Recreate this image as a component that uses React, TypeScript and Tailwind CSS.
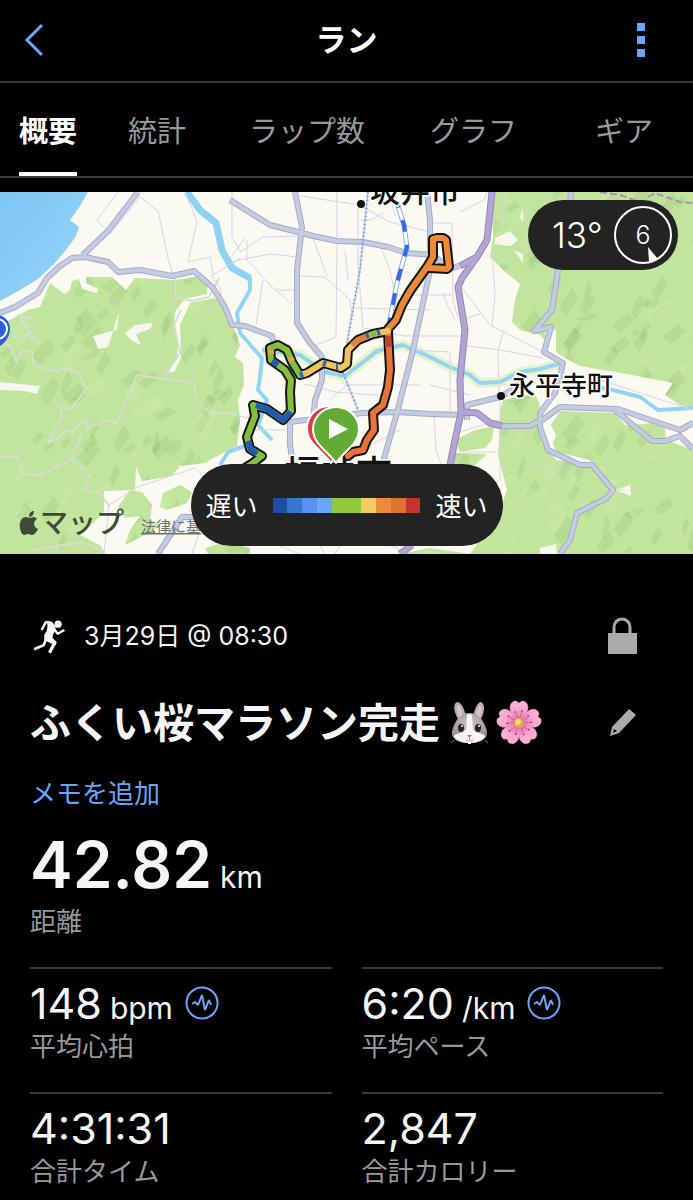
import React from 'react';

const WOODS = [
  'M50 283L64 294L70 290L72 281L79 279L82 289L97 293L98 289L86 283V277H112L126 290L135 278L175 280L195 277L207 284V294L185 299L176 310L174 320L178 340L177 358L168 372L140 376L137 392L128 430L123 429L124 410L137 375L174 372L181 358L180 325L190 303L215 298L222 303L228 317L237 335L240 345L235 357L243 363L244 385L238 400L240 420L237 446L223 453L205 463L180 466L172 476L142 481L136 467L135 490L104 491V512L92 524L80 535L100 545L105 554H0V325L14 318L28 310L40 307Z',
  'M118 507L130 490L142 492L152 505L150 520L160 525L145 535L125 545L130 530L140 516L125 518Z',
  'M160 507L163 493L180 485L192 492L187 503L167 510Z',
  'M205 548L225 542L250 548V554H208Z',
  'M492 192L493 237L490 257L503 270L520 284L515 300L512 322L520 330L540 335L545 340V330H556V352L565 358L580 366L603 370L627 374L673 383L665 395L680 405L693 408V192Z',
  'M500 412L503 400L535 394L540 406L538 420L550 448L556 460L592 465L590 460L556 452L553 443L556 435L551 425L560 411L615 413L625 425L643 424L664 422L666 440L693 450V554H400L430 548L470 554L500 510L507 490L498 455L500 428Z',
  'M455 440L475 430L494 426L492 440L485 448L460 452Z',
  'M455 453L487 454L475 465H452Z',
];

const CLEARINGS = [
  'M93 336L117 330L119 312L115 324L112 335L108 347L98 349Z',
  'M125 333L135 325L153 323L150 329L136 334L141 345L132 341Z',
  'M0 382L40 386L37 394L24 391L0 390Z',
  'M495 238L510 231L518 240L511 246L494 244Z',
  'M514 250L523 254V263Z',
  'M520 217L523 208V222Z',
  'M615 490L630 485L631 496Z',
  'M540 548L556 544L557 554H540Z',
];

const MAIN_ROADS = [
  'M138 192L108 231L83 255',
  'M0 313L15 307L38 293L47 278L60 266L72 258L85 257L108 262L118 272L140 270L172 276L194 271L213 288L225 307L232 325L245 326L272 336L275 350',
  'M230 200L270 225L302 233L313 236L337 241L363 242L388 247L407 253L433 255L450 269L470 262',
  'M295 192L302 227L297 270V323L310 343L322 357V380L315 400L313 420',
  'M427 192L430 220V270L423 303L413 350L397 413L385 455L380 475',
  'M294 470L290 445V422L330 417L363 413L397 412L430 414L463 415',
  'M571 192L568 230L558 270L552 310L534 331L551 327L544 352L563 363L560 377L555 393L540 413V427L548 450L580 465L592 465L613 490L607 498L577 513L570 540L560 554',
  'M502 426H530L545 418L560 407L618 409L680 430L693 423',
  'M615 410L652 441H665L680 436L693 449',
  'M467 420V405L500 397L515 388',
  'M158 554L182 517H200',
];

const HIGHWAYS = [
  'M492 192L487 240L477 257L462 278L458 287L465 330L463 350L460 380L461 413L455 440L449 470',
  'M460 266L477 257',
  'M462 412L477 413L490 423L502 426',
  'M400 554L412 545',
];

const LANES = [
  'M118 192L97 220L110 234L140 197L158 211L168 258L173 275',
  'M185 192L197 221L188 262L210 257L213 275L240 258',
  'M232 192V237L241 252L262 237L302 236',
  'M211 275L220 288L222 302',
  'M337 192V243L336 337L316 345L327 365',
  'M230 258L245 238M247 240V260L270 285L292 304M230 262L270 254L297 257M263 280L256 325M297 276L325 277L350 300L352 320M313 238L327 276M276 290H297',
  'M345 250L348 280M358 208V265L363 328L405 336H468',
  'M300 196L360 205L390 222L430 232M361 220H371L383 213M390 192L395 216M378 240L390 270L395 295H452M432 223H452L453 300L458 318',
  'M355 308L430 310M443 292L447 304L455 320M462 288L490 325L543 352M460 345L500 350L543 358M492 250L495 295L492 325M504 330L498 350L499 395',
  'M487 192L484 200L460 212M505 192L500 225M460 320L480 314',
  'M305 384L335 392L388 396M330 400L350 382M322 357L345 385H420M430 385L470 395M434 414L436 450L445 475M400 430L370 445L300 460',
  'M230 415L250 418M255 430L290 430M413 350L450 352V412M500 400V480M460 452H496M460 432L499 420M600 380L693 410',
  'M104 554L109 505L137 487L195 468L203 476M185 520L205 530M192 554L200 530M320 545L325 554M340 545L335 554M280 546L300 554M390 545L410 554',
  'M530 465L562 466M612 490H625',
];

const TRAILS = [
  'M12 335L20 340L27 334L34 339L28 330L38 343L20 318H31L17 315',
  'M0 333L12 350L16 362L22 351L32 352L34 365L55 371L66 368L80 374L86 388L71 410L60 406L62 415L48 443L58 438L67 430L73 432L86 418L87 430L105 420L117 423L137 375L194 383L196 402L210 412L240 414',
  'M0 457L18 457L22 474L40 475L72 459L82 432M72 459L91 478L84 490L100 493L109 506M30 551L80 542L104 551',
  'M175 276V297L192 301L209 297L219 278M181 310L174 325L180 353L165 376',
];

const RIVERS = [
  'M187 192L200 210L216 223L222 250L232 268L250 278L250 290L237 313L240 333L253 348L262 358L260 377L258 390L267 400L258 425L272 440',
  'M220 465L228 452L245 446L258 449',
  'M262 350L300 355L325 372L345 376L363 362L377 351L403 345L430 357L450 367L470 375L480 383L500 382L520 372L540 369L562 363',
  'M585 385L613 390L640 397L658 410L693 408',
];

const BORDERS = 'M600 192L620 195L645 204M648 197L655 193L680 202L693 203';

const ROUTE = [
  { color: '#ea8a38', d: 'M388 329L396 320L402 305L410 291L427 267L433 257L433 239L437 238H443L446 240L449 267L447 269L430 268' },
  { color: '#e9713a', d: 'M388 332L390 370L388 387L383 405L373 413L374 430L367 440L363 450L353 452L348 456' },
  { color: '#f0c45c', d: 'M388 331L373 334L358 340L348 350L347 364L341 368L323 363L307 373L300 375' },
  { color: '#83bf3b', d: 'M300 375L292 362L287 350L278 345L270 348L271 360L285 370L291 380L290 392L291 411L283 420L267 409L253 405L255 416L247 437L250 449L262 456L253 463L245 468' },
];

const ROUTE_MARKS = [
  { color: '#c6402e', d: 'M388 336V347' },
  { color: '#dd8138', d: 'M368 336L358 340L352 345' },
  { color: '#2c64b8', d: 'M380 332L377 333M369 335L366 336M326 364L323 363M338 367L336 367M303 374L300 375' },
  { color: '#83bf3b', d: 'M376 333L370 335' },
  { color: '#eaa24a', d: 'M271 350V354M290 357L292 361' },
  { color: '#2359b0', d: 'M272 361L278 365M291 412L283 420L267 409L256 405M248 441L251 450L257 454' },
];

const LEGEND = [
  'bg-[#1d4f9f]',
  'bg-[#3976cf]',
  'bg-[#5692ef]',
  'bg-[#69a5fb]',
  'bg-[#92c840]',
  'bg-[#92c840]',
  'bg-[#f3cc62]',
  'bg-[#ea8d3b]',
  'bg-[#dc7330]',
  'bg-[#c4342c]',
];

// Small slanted facets that give the woods their hill relief.
const buildFacets = () => {
  let seed = 11;
  const next = () => {
    seed = (seed * 16807) % 2147483647;
    return seed / 2147483647;
  };
  return Array.from({ length: 520 }, () => {
    const x = Math.round(next() * 693);
    const y = 192 + Math.round(next() * 362);
    const w = 5 + Math.round(next() * 11);
    const h = 6 + Math.round(next() * 14);
    return {
      d: `M${x} ${y}l${w} ${-h}l${Math.round(w / 2)} ${Math.round(h / 2)}l${-w} ${h}Z`,
      dark: next() > 0.4,
    };
  });
};

const FACETS = buildFacets();

const Roads: React.FC<{ paths: string[]; edge: string; fill: string; width: number }> = ({ paths, edge, fill, width }) => (
  <g fill="none" strokeLinejoin="round">
    <path d={paths.join('')} stroke={edge} strokeWidth={width} />
    <path d={paths.join('')} stroke={fill} strokeWidth={width - 2} />
  </g>
);

const RouteMap = () => (
  <svg viewBox="0 192 693 362" className="block h-auto w-full" role="img" aria-label="ルートマップ">
    <defs>
      <clipPath id="woods">
        <path d={WOODS.join('')} />
      </clipPath>
      <linearGradient id="sea" x1="0" y1="0" x2="1" y2="1">
        <stop offset="0" stopColor="#7fc6f3" />
        <stop offset="1" stopColor="#95d4f8" />
      </linearGradient>
    </defs>
    <rect y="192" width="693" height="362" fill="#fafaf3" />
    <path d="M0 192H88L80 206L70 220L79 227L76 236L66 250L54 264L38 279L20 290L0 301Z" fill="url(#sea)" />
    <path d={WOODS.join('')} fill="#c1e59d" />
    <g clipPath="url(#woods)">
      {FACETS.map((facet, i) => (
        <path key={i} d={facet.d} fill={facet.dark ? '#86b266' : '#d3f0b0'} opacity={facet.dark ? 0.18 : 0.25} />
      ))}
    </g>
    <path d={CLEARINGS.join('')} fill="#f8f7ef" />
    <g fill="none" strokeLinejoin="round">
      <path d={RIVERS[2]} stroke="#e6f3cb" strokeWidth="10" />
      <path d={RIVERS.join('')} stroke="#93d4f3" strokeWidth="4" />
      <path d="M187 192L200 210L216 223L222 250L232 268L250 278" stroke="#8fd2f5" strokeWidth="7" />
      <path d={TRAILS.join('')} stroke="#d5dfcf" strokeWidth="2" />
      <path d={LANES.join('')} stroke="#d5d5e2" strokeWidth="1" />
      <path d={BORDERS} stroke="#b08fb0" strokeWidth="2" strokeDasharray="7 3" />
    </g>
    <Roads paths={MAIN_ROADS} edge="#a4abc8" fill="#c5cbe0" width={6} />
    <Roads paths={HIGHWAYS} edge="#9386b8" fill="#b3a5d3" width={7} />
    <g fill="none">
      <path d="M368 192L360 270L348 337L343 373L358 410" stroke="#8ea6e8" strokeWidth="1" />
      <path d="M368 192L360 270L348 337L343 373L358 410" stroke="#8ea6e8" strokeWidth="3" strokeDasharray="1 3" />
      <path d="M397 203L404 225L407 247L397 283L389 325" stroke="#8fa9ee" strokeWidth="5" />
      <path d="M397 203L404 225L407 247L397 283L389 325" stroke="#fff" strokeWidth="3" />
      <path d="M397 203L404 225L407 247L397 283L389 325" stroke="#2f6be8" strokeWidth="4" strokeDasharray="12 13" strokeDashoffset="7" />
    </g>
    <g fill="#111" stroke="#fff" strokeWidth="3" paintOrder="stroke" className="font-['Noto_Sans_CJK_JP',sans-serif] font-medium">
      <text x="370" y="202" fontSize="30">坂井市</text>
      <text x="509" y="395" fontSize="26">永平寺町</text>
      <text x="284" y="487" fontSize="36">福井市</text>
    </g>
    <circle cx="361" cy="204" r="4" fill="#111" />
    <circle cx="501" cy="396" r="4" fill="#111" />
    <g fill="none" strokeLinejoin="round" strokeLinecap="round">
      <path d={ROUTE.map((part) => part.d).join('')} stroke="#15150f" strokeWidth="10" />
      {ROUTE.map((part) => (
        <path key={part.color} d={part.d} stroke={part.color} strokeWidth="6" />
      ))}
    </g>
    <g fill="none">
      {ROUTE_MARKS.map((mark, i) => (
        <path key={i} d={mark.d} stroke={mark.color} strokeWidth="6" />
      ))}
    </g>
    <g stroke="#fff" strokeWidth="2">
      <path d="M331 463C322 450 307 444 307 428A22 22 0 0 1 351 428C351 444 338 452 331 463Z" fill="#e23b3f" />
      <path d="M336 463C327 450 313 444 313 429A23 22 0 0 1 359 429C359 444 345 450 336 463Z" fill="#62ab35" />
    </g>
    <path d="M329 419L348 429L329 439Z" fill="#fff" />
    <g>
      <path d="M-16 330A13 14 0 0 1 10 328C10 340 3 343 -3 349Z" fill="#2a5fe0" />
      <circle cx="-3" cy="329" r="10" fill="#2a5fe0" stroke="#fff" strokeWidth="2" />
    </g>
    <g fill="#3f4a38">
      <path d="M37 519C33 521 33 527 38 529C36 533 34 535 32 535C30 535 30 534 28 534C26 534 26 535 24 535C21 534 19 528 20 523C21 519 23 517 26 517C28 517 28 518 30 518C31 518 32 517 34 517C35 517 36 518 37 519ZM29 517C29 513 31 511 34 511C34 514 32 517 29 517Z" />
      <text x="40" y="533" fontSize="28" className="font-['Noto_Sans_CJK_JP',sans-serif] font-medium">マップ</text>
    </g>
    <text x="141" y="532" fontSize="15" fill="#6d7368" className="font-['Noto_Sans_CJK_JP',sans-serif] underline">法律に基</text>
  </svg>
);

const WeatherBadge = () => (
  <div className="absolute right-[15px] top-2 flex h-[70px] w-[150px] items-center justify-between rounded-full bg-[#232323] pl-6 pr-1.5 text-white">
    <span className="text-[35px] font-light leading-none">13°</span>
    <span className="relative flex size-[58px] items-center justify-center rounded-full border-2 border-white text-[25px] font-light leading-none">
      6
      <svg viewBox="0 0 58 58" className="absolute -inset-0.5" aria-hidden="true">
        <path d="M34 41L44 53L35 56Z" fill="#fff" />
      </svg>
    </span>
  </div>
);

const SpeedLegend = () => (
  <div className="absolute bottom-2 left-1/2 flex h-[82px] w-[312px] -translate-x-1/2 items-center justify-between rounded-full bg-[#232323] px-[15px] text-[26px] leading-none text-white">
    <span className="pt-1">遅い</span>
    <div className="flex h-[15px] w-[148px]">
      {LEGEND.map((color, i) => (
        <span key={i} className={`flex-1 ${color}`} />
      ))}
    </div>
    <span className="pt-1">速い</span>
  </div>
);

const RunnerIcon = () => (
  <svg viewBox="0 0 100 105" className="ml-[3px] h-[35px] w-[33px]" fill="none" stroke="#f5f5f5" strokeLinejoin="round" aria-hidden="true">
    <circle cx="76" cy="15" r="11" fill="#f5f5f5" stroke="none" />
    <path d="M40 5L58 8L68 22L68 34L60 48L59 56L72 70L68 80L54 73L34 64L34 48L42 34L44 20Z" fill="#f5f5f5" stroke="none" />
    <path d="M52 9L39 9L26 33" strokeWidth="7" />
    <path d="M61 26L75 44L95 33" strokeWidth="7" />
    <path d="M63 68L62 78L50 102" strokeWidth="10" />
    <path d="M40 60L32 79L3 91" strokeWidth="8" />
  </svg>
);

const RabbitIcon = () => (
  <svg viewBox="0 0 44 46" className="h-[46px] w-[44px]" role="img" aria-label="うさぎ">
    <defs>
      <radialGradient id="fur" cx="0.5" cy="0.35" r="0.65">
        <stop offset="0" stopColor="#cbc5c5" />
        <stop offset="1" stopColor="#918b8c" />
      </radialGradient>
    </defs>
    <path d="M9 2C3 5 8 18 13 23L18 17C17 10 13 1 9 2Z" fill="#b5aeae" />
    <path d="M33 2C39 5 35 18 30 23L25 17C26 10 30 1 33 2Z" fill="#b5aeae" />
    <path d="M10 5C7 8 10 16 13 20L15 16C14 10 12 5 10 5Z" fill="#e6bfc1" />
    <path d="M32 5C35 8 33 16 30 20L28 16C29 10 31 5 32 5Z" fill="#e6bfc1" />
    <path d="M21 13C12 13 8 20 5 28C1 38 9 43 21 43C34 43 42 38 38 28C35 20 31 13 21 13Z" fill="url(#fur)" />
    <path d="M19 15C20 14 23 14 24 15L25 29C27 34 38 33 37 37C33 42 26 43 22 43C16 43 10 42 6 37C5 33 16 34 18 29Z" fill="#f7f4f3" />
    <ellipse cx="13" cy="28" rx="3" ry="4" fill="#26242a" />
    <ellipse cx="30" cy="28" rx="3" ry="4" fill="#26242a" />
    <circle cx="14" cy="26" r="1" fill="#fff" />
    <circle cx="31" cy="26" r="1" fill="#fff" />
    <path d="M19 35H24L21.500 38Z" fill="#b9747e" />
    <path d="M21.500 38V40M18 40Q20 42 21.500 40Q23 42 25 40" stroke="#b3a3a5" fill="none" />
    <path d="M3 43L6 40M37 40L40 43" stroke="#7b7173" fill="none" />
    <path d="M20 42H23V44H20Z" fill="#fff" />
  </svg>
);

const BlossomIcon = () => (
  <svg viewBox="-23 -23 46 46" className="size-[46px]" role="img" aria-label="桜">
    <defs>
      <radialGradient id="petal" cx="0" cy="0" r="23" gradientUnits="userSpaceOnUse">
        <stop offset="0.2" stopColor="#e878b0" />
        <stop offset="0.6" stopColor="#f7a3d0" />
        <stop offset="1" stopColor="#fbb9dc" />
      </radialGradient>
    </defs>
    {[0, 72, 144, 216, 288].map((angle) => (
      <g key={angle} transform={`rotate(${angle})`}>
        <path d="M0 0C-4 -6 -9 -10 -9 -15C-9 -20 -6 -22 -3 -22L0 -20L3 -22C6 -22 9 -20 9 -15C9 -10 4 -6 0 0Z" fill="url(#petal)" stroke="#e68bb9" strokeWidth="0.5" />
        <path d="M-1 -5L-4 -11M1 -5L3 -12" stroke="#b83f7d" strokeWidth="0.5" />
        <circle cx="-4" cy="-11" r="0.8" fill="#8f2452" />
        <circle cx="3" cy="-12" r="0.8" fill="#8f2452" />
      </g>
    ))}
    <circle r="5" fill="#dba83c" />
    <circle cx="-1" cy="-1" r="3" fill="#f3d97a" />
  </svg>
);

const PulseIcon = () => (
  <svg viewBox="0 0 34 34" className="size-[34px]" fill="none" stroke="#6aa5f8" strokeWidth="2" aria-hidden="true">
    <circle cx="17" cy="17" r="15.500" />
    <path d="M7 18L10 16L13 19L17 9L20 24L24 14L26 19" strokeLinejoin="bevel" />
  </svg>
);

interface StatProps {
  value: string;
  unit?: string;
  label: string;
  pulse?: boolean;
}

const STATS: StatProps[] = [
  { value: '148', unit: 'bpm', label: '平均心拍', pulse: true },
  { value: '6:20', unit: '/km', label: '平均ペース', pulse: true },
  { value: '4:31:31', label: '合計タイム' },
  { value: '2,847', label: '合計カロリー' },
];

const Stat: React.FC<StatProps> = ({ value, unit, label, pulse }) => (
  <div className="h-[125px] border-t-2 border-[#3a3a3a] pt-3">
    <div className="flex h-11 items-center">
      <p className="text-[43px] leading-[44px] text-[#f5f5f5]">
        {value}
        {unit && <span className="ml-2 text-3xl leading-none">{unit}</span>}
      </p>
      {pulse && (
        <button type="button" aria-label={`${label}のグラフ`} className="ml-3">
          <PulseIcon />
        </button>
      )}
    </div>
    <p className="mt-1 text-[26px] leading-9 text-[#999]">{label}</p>
  </div>
);

const TABS = ['概要', '統計', 'ラップ数', 'グラフ', 'ギア'];

const App = () => {
  return (
    <div className="min-h-screen bg-black font-['Inter','Noto_Sans_CJK_JP',sans-serif] text-white">
      <header className="grid h-[83px] grid-cols-[1fr_auto_1fr] items-center border-b-2 border-[#3a3a3a] pb-0.5 pl-6 pr-12">
        <button type="button" aria-label="戻る">
          <svg viewBox="0 0 20 34" className="h-[34px] w-5" fill="none" stroke="#6aa5f8" strokeWidth="3">
            <path d="M18 2L3 17L18 32" />
          </svg>
        </button>
        <h1 className="pl-6 text-[31px] font-bold leading-none">ラン</h1>
        <button type="button" aria-label="メニュー" className="flex flex-col gap-[5px] justify-self-end">
          <span className="size-2 bg-[#6aa5f8]" />
          <span className="size-2 bg-[#6aa5f8]" />
          <span className="size-2 bg-[#6aa5f8]" />
        </button>
      </header>

      <nav className="grid h-[95px] grid-cols-[109fr_121fr_181fr_165fr_98fr] justify-items-start border-b-2 border-[#3a3a3a] pl-[19px]">
        {TABS.map((tab, i) => (
          <button
            key={tab}
            type="button"
            className={`whitespace-nowrap border-b-4 pt-2 text-[29px] leading-none ${i === 0 ? 'border-white font-bold text-white' : 'border-transparent text-[#999]'}`}
          >
            {tab}
          </button>
        ))}
      </nav>

      <section className="relative mt-3.5 overflow-hidden">
        <RouteMap />
        <WeatherBadge />
        <SpeedLegend />
      </section>

      <main className="px-[30px] pt-[60px]">
        <div className="flex h-11 items-center">
          <RunnerIcon />
          <p className="ml-[18px] text-[25px] leading-none text-[#f5f5f5]">3月29日 @ 08:30</p>
          <svg viewBox="0 0 30 38" className="ml-auto mr-[26px] h-[38px] w-[30px]" role="img" aria-label="非公開">
            <path d="M1 16H30V37H1Z" fill="#aaa" />
            <path d="M7 17V10A8 8 0 0 1 23 10V17" fill="none" stroke="#aaa" strokeWidth="3" />
          </svg>
        </div>

        <div className="mt-[38px] flex h-[54px] items-center">
          <h2 className="text-[41px] font-bold leading-none text-[#f5f5f5]">ふくい桜マラソン完走</h2>
          <span className="ml-2 flex gap-1">
            <RabbitIcon />
            <BlossomIcon />
          </span>
          <button type="button" aria-label="編集" className="ml-auto mr-[26px]">
            <svg viewBox="0 0 28 28" className="size-7" fill="#aaa">
              <path d="M20 0L27 6L10 24L1 27L3 18ZM5 20L4 24L8 22Z" fillRule="evenodd" />
            </svg>
          </button>
        </div>

        <a href="#memo" className="mt-[26px] block text-[26px] leading-9 text-[#6aa5f8]">
          メモを追加
        </a>

        <div className="mt-5 h-[135px]">
          <p className="text-[64px] font-semibold leading-[66px] text-[#f5f5f5]">
            42.82
            <span className="ml-2 text-3xl font-normal">km</span>
          </p>
          <p className="mt-1.5 text-[26px] leading-9 text-[#999]">距離</p>
        </div>

        <div className="grid grid-cols-2 gap-x-[30px]">
          {STATS.map((stat) => (
            <Stat key={stat.label} {...stat} />
          ))}
        </div>
      </main>
    </div>
  );
};

export default App;
